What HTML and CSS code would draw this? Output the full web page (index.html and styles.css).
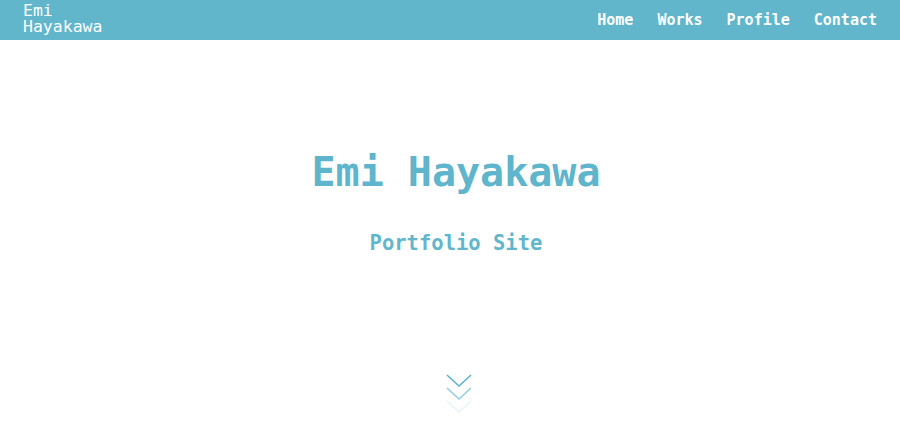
FILE: index.html
```html
<!DOCTYPE html>
<html lang="ja">
<head>
<meta charset="utf-8">
<title>Emi Hayakawa</title>
<link rel="stylesheet" href="styles.css">
</head>
<body>
<header class="site-header">
  <a class="logo" href="#"><span class="logo-line">Emi</span><span class="logo-line">Hayakawa</span></a>
  <nav class="nav">
    <a href="#">Home</a>
    <a href="#">Works</a>
    <a href="#">Profile</a>
    <a href="#">Contact</a>
  </nav>
</header>
<main class="hero">
  <h1 class="hero-title">Emi Hayakawa</h1>
  <p class="hero-sub">Portfolio Site</p>
  <div class="scroll-down">
    <svg width="26" height="42" viewBox="0 0 26 42" fill="none" stroke-width="1.6">
      <polyline points="1,1 13,12 25,1" stroke="#5eb3c9"/>
      <polyline points="1,14 13,25 25,14" stroke="#94cfdf"/>
      <polyline points="1,27 13,38 25,27" stroke="#e6f4f8"/>
    </svg>
  </div>
</main>
</body>
</html>
```
FILE: styles.css
```css
* { box-sizing: border-box; }
html, body { margin: 0; padding: 0; }
body {
  background: #ffffff;
  font-family: "DejaVu Sans Mono", "Liberation Mono", monospace;
  color: #62b6cb;
  height: 435px;
  overflow: hidden;
}
a { text-decoration: none; color: inherit; }
.site-header {
  height: 40px;
  background: #62b6cb;
  display: flex;
  justify-content: space-between;
  align-items: flex-start;
  padding: 0 23px;
}
.logo {
  color: #ffffff;
  font-size: 16.5px;
  padding-top: 3px;
  display: flex;
  flex-direction: column;
}
.logo-line {
  display: block;
  height: 16px;
  line-height: 16px;
}
.nav {
  display: flex;
  gap: 24px;
}
.nav a {
  color: #ffffff;
  font-weight: bold;
  font-size: 15px;
  line-height: 40px;
}
.hero {
  display: flex;
  flex-direction: column;
  align-items: center;
  padding-top: 108px;
  padding-left: 12px;
}
.hero-title {
  margin: 0;
  font-size: 40px;
  line-height: 48px;
  font-weight: bold;
  color: #5fb5cb;
}
.hero-sub {
  margin: 35px 0 0;
  font-size: 20.5px;
  line-height: 24px;
  font-weight: bold;
  color: #62b6cb;
}
.scroll-down {
  margin-top: 119px;
  margin-left: 6px;
  line-height: 0;
}
```
